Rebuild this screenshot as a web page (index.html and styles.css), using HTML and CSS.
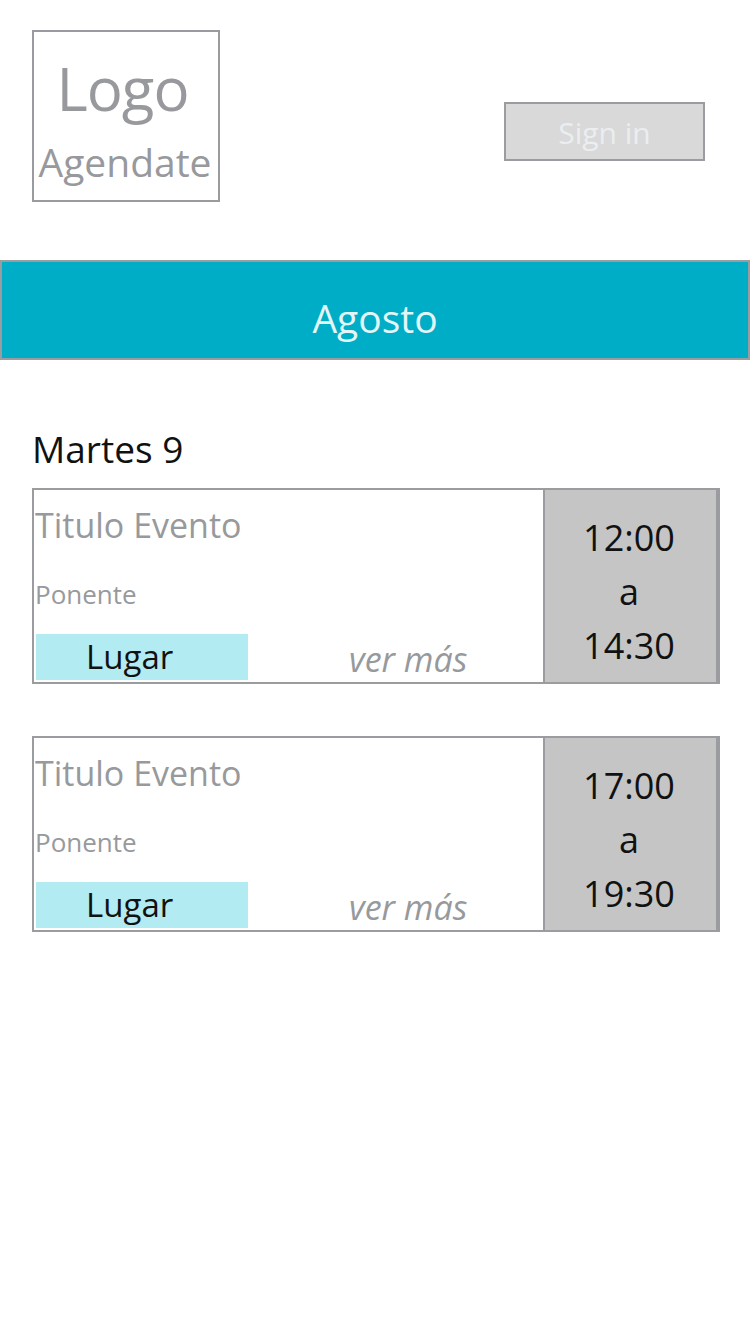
FILE: index.html
```html
<!DOCTYPE html>
<html lang="es">
<head>
<meta charset="utf-8">
<title>Agendate</title>
<link rel="stylesheet" href="styles.css">
</head>
<body>
  <header class="top">
    <div class="logo">
      <span class="logo-main">Logo</span>
      <span class="logo-sub">Agendate</span>
    </div>
    <button class="signin">Sign in</button>
  </header>

  <div class="month">Agosto</div>

  <main class="day">
    <h2 class="day-title">Martes 9</h2>

    <article class="event">
      <div class="event-info">
        <div class="event-title">Titulo Evento</div>
        <div class="event-speaker">Ponente</div>
        <div class="event-bottom">
          <span class="event-place">Lugar</span>
          <span class="event-more">ver más</span>
        </div>
      </div>
      <div class="event-time">
        <span>12:00</span>
        <span>a</span>
        <span>14:30</span>
      </div>
    </article>

    <article class="event">
      <div class="event-info">
        <div class="event-title">Titulo Evento</div>
        <div class="event-speaker">Ponente</div>
        <div class="event-bottom">
          <span class="event-place">Lugar</span>
          <span class="event-more">ver más</span>
        </div>
      </div>
      <div class="event-time">
        <span>17:00</span>
        <span>a</span>
        <span>19:30</span>
      </div>
    </article>
  </main>
</body>
</html>
```

FILE: styles.css
```css
* { box-sizing: border-box; }

html, body {
  margin: 0;
  padding: 0;
  background: #ffffff;
  font-family: "Open Sans", "Noto Sans", "Liberation Sans", sans-serif;
}

body {
  width: 750px;
  min-height: 1334px;
}

.top {
  display: flex;
  align-items: flex-start;
  justify-content: space-between;
  padding: 30px 45px 0 32px;
  height: 202px;
}

.logo {
  width: 188px;
  height: 172px;
  border: 2px solid #999b9e;
  display: flex;
  flex-direction: column;
  align-items: center;
  color: #97999c;
}

.logo-main {
  font-size: 60px;
  line-height: 60px;
  margin-top: 26px;
  margin-right: 7px;
  letter-spacing: -1px;
}

.logo-sub {
  font-size: 39px;
  line-height: 40px;
  margin-top: 24px;
  margin-right: 2px;
}

.signin {
  margin-top: 72px;
  width: 201px;
  height: 59px;
  background: #d9d9d9;
  border: 2px solid #9a9c9f;
  color: #eaeef1;
  font-family: inherit;
  font-size: 30px;
  line-height: 1;
  padding: 2px 0 0;
}

.month {
  margin-top: 58px;
  height: 100px;
  background: #00adc6;
  border: 2px solid #9a9c9f;
  color: #e4f5f8;
  font-size: 39px;
  display: flex;
  align-items: center;
  justify-content: center;
  padding-top: 14px;
}

.day {
  padding: 0 30px 0 32px;
}

.day-title {
  margin: 67px 0 17px 0;
  font-weight: 400;
  font-size: 37px;
  line-height: 44px;
  color: #111111;
}

.event {
  display: flex;
  width: 688px;
  height: 196px;
  border: 2px solid #9a9c9f;
  margin-bottom: 52px;
}

.event-info {
  flex: 1;
  display: flex;
  flex-direction: column;
  padding: 0 0 2px 1px;
}

.event-title {
  font-size: 34px;
  line-height: 40px;
  margin-top: 15px;
  color: #97999c;
}

.event-speaker {
  font-size: 26px;
  line-height: 30px;
  margin-top: 34px;
  color: #97999c;
}

.event-bottom {
  margin-top: auto;
  display: flex;
  align-items: flex-end;
}

.event-place {
  width: 212px;
  height: 46px;
  background: #b3ebf2;
  color: #111111;
  font-size: 33px;
  line-height: 46px;
  padding-left: 50px;
  margin-left: 1px;
}

.event-more {
  margin-left: 101px;
  margin-bottom: 1px;
  font-size: 34px;
  font-style: italic;
  color: #97999c;
  line-height: 40px;
}

.event-time {
  width: 175px;
  background: #c4c5c4;
  border-left: 2px solid #9a9c9f;
  border-right: 2px solid #9a9c9f;
  display: flex;
  flex-direction: column;
  align-items: center;
  justify-content: center;
  font-size: 36px;
  line-height: 54px;
  color: #111111;
  padding-top: 12px;
  padding-right: 3px;
}
```
